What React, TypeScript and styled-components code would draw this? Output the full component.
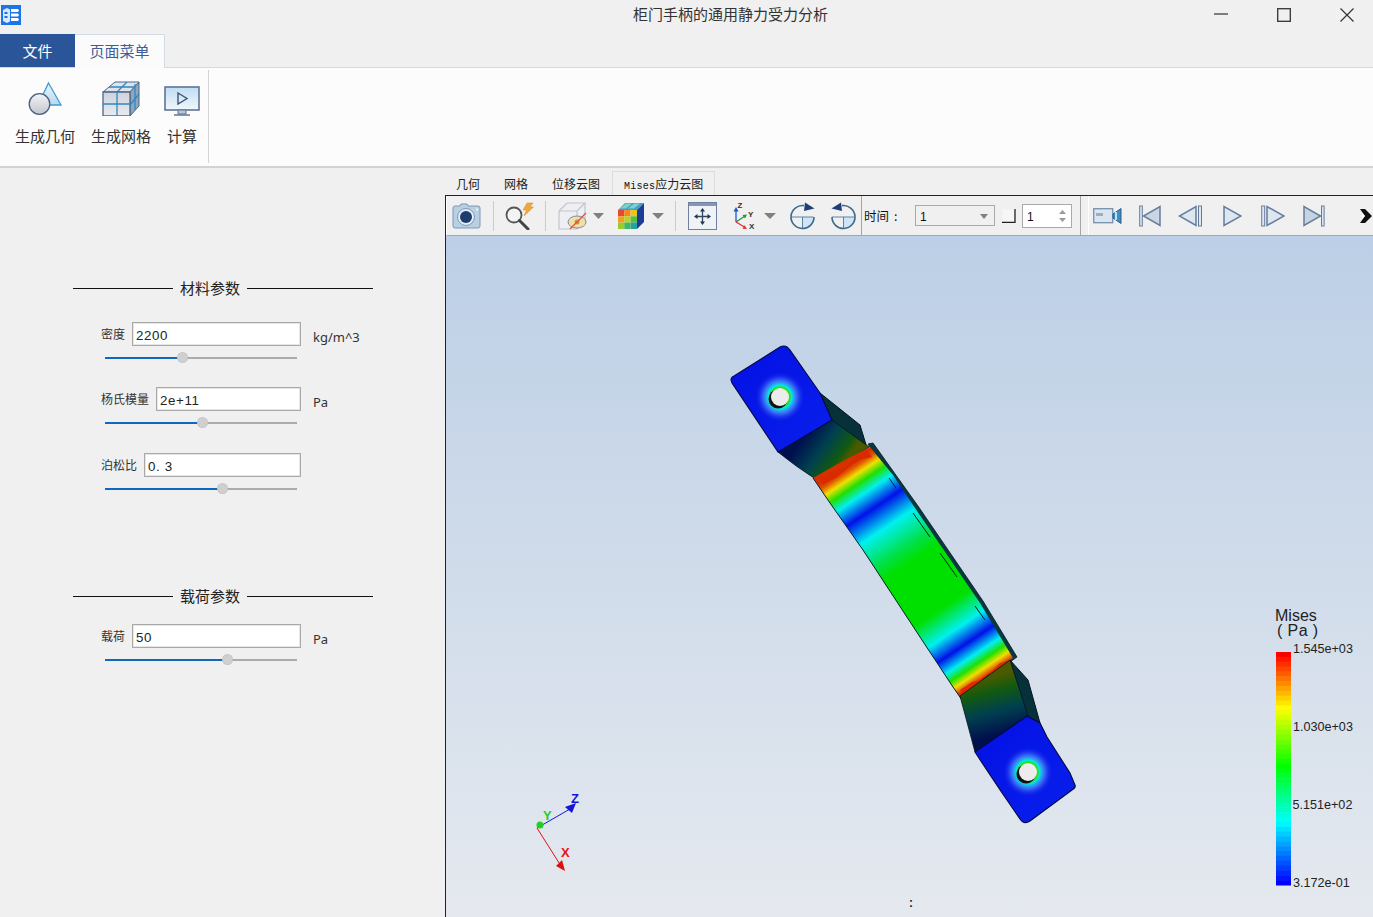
import React from "react";
import styled, { createGlobalStyle } from "styled-components";

const CJK = `"Noto Sans CJK SC", "Noto Sans", sans-serif`;
const MONO = `"Liberation Mono", "Noto Sans CJK SC", monospace`;

const Global = createGlobalStyle`
  html, body { margin: 0; padding: 0; background: #f0f0f0; }
  * { box-sizing: border-box; }
`;

const Win = styled.div`
  width: 1373px; height: 917px; display: flex; flex-direction: column;
  overflow: hidden; background: #f0f0f0; font-family: ${CJK}; color: #222;
`;
const TitleBar = styled.div`display: flex; align-items: flex-start; height: 34px; flex: none;`;
const AppIcon = styled.svg`width: 20px; height: 20px; margin: 5px 0 0 1px; flex: none; display: block;`;
const Title = styled.div`
  width: 196px; margin: 4px 0 0 612px; font-size: 15px; line-height: 20px; color: #333; white-space: nowrap;
`;
const WinCtl = styled.div`display: flex; gap: 49px; margin: 8px 0 0 385px;`;
const WinBtn = styled.svg`width: 14px; height: 14px; display: block;`;

const MenuRow = styled.div`
  display: flex; height: 34px; flex: none; border-bottom: 1px solid #d9d9d9;
`;
const FileTab = styled.div`
  width: 75px; height: 33px; background: #2a5699; color: #fff; font-size: 15px;
  line-height: 34px; text-align: center;
`;
const PageTab = styled.div`
  width: 90px; height: 34px; background: #fbfbfb; color: #3f5f9a; font-size: 15px; line-height: 31px;
  text-align: center; border: 1px solid #d5dbe3; border-bottom: none; border-left: none;
  position: relative; z-index: 1;
`;

const Ribbon = styled.div`
  display: flex; height: 100px; flex: none; background: #fcfcfc; border-bottom: 2px solid #d2d2d2;
`;
const RibbonGroup = styled.div`
  display: flex; gap: 16px; padding: 0 11px 0 15px; margin: 2px 0 3px; border-right: 1px solid #d4d4d4; height: 93px;
`;
const RibbonBtn = styled.div`display: flex; flex-direction: column; align-items: center; padding-top: 8px;`;
const RibbonIcon = styled.svg`height: 38px; width: 38px; margin: 0 -4px; display: block;`;
const RibbonLabel = styled.div`font-size: 15px; line-height: 20px; margin-top: 10px; color: #333; white-space: nowrap;`;

const Main = styled.div`display: flex; flex: 1; min-height: 0;`;
const Panel = styled.div`width: 445px; flex: none; padding: 110px 0 0 73px;`;
const Heading = styled.div<{ $mt?: number }>`
  display: flex; align-items: center; width: 300px; height: 20px; font-size: 15px; color: #222;
  margin-top: ${(p) => p.$mt ?? 0}px;
`;
const HeadLine = styled.div<{ $w?: number }>`
  height: 1px; background: #111; ${(p) => (p.$w ? `width: ${p.$w}px;` : "flex: 1;")}
`;
const HeadText = styled.div`margin: 0 7px; padding-bottom: 2px; white-space: nowrap; width: 60px;`;

const Field = styled.div<{ $mt: number }>`margin: ${(p) => p.$mt}px 0 0 28px;`;
const Row = styled.div`display: flex; align-items: flex-start;`;
const InputWrap = styled.div`display: flex; align-items: center; width: 200px; gap: 7px; flex: none;`;
const Label = styled.label`font-size: 12px; line-height: 24px; color: #333; white-space: nowrap; flex: none;`;
const Input = styled.input`
  flex: 1; min-width: 0; height: 24px; border: 1px solid #a9a9a9; outline: 1px solid #e6e6e6; outline-offset: -2px;
  background: #fff; font: 13.33px "Liberation Sans", sans-serif; letter-spacing: .6px; color: #222;
  padding: 2px 3px 0; margin: 0;
`;
const Unit = styled.div`font: 13px "Noto Sans", sans-serif; line-height: 18px; margin: 6px 0 0 12px; color: #333; white-space: nowrap;`;
const Slider = styled.div`position: relative; width: 192px; height: 12px; margin: 6px 0 0 4px;`;
const Track = styled.div`position: absolute; left: 0; right: 0; top: 5px; height: 2px; background: #ababab;`;
const Fill = styled.div`position: absolute; left: 0; top: 5px; height: 2px; background: #0f68b8;`;
const Thumb = styled.div`
  position: absolute; top: 0; width: 11px; height: 11px; margin-left: -5px; border-radius: 50%;
  background: #cfcfcf; border: 1px dotted #bdbdbd;
`;

const Right = styled.div`flex: 1; display: flex; flex-direction: column; min-width: 0;`;
const TabBar = styled.div`display: flex; height: 27px; flex: none; align-items: flex-end; margin-left: -1px;`;
const ViewTab = styled.div<{ $active?: boolean }>`
  height: 24px; padding: 0 11px; font-size: 12px; line-height: 23px; color: #222; white-space: nowrap;
  border: 1px solid ${(p) => (p.$active ? "#dcdcdc" : "transparent")}; border-bottom: none;
`;
const Latin = styled.span`font-family: ${MONO}; font-size: 10px; letter-spacing: .25px; color: #111;`;
const Body = styled.div`
  flex: 1; display: flex; flex-direction: column; min-height: 0;
  border-left: 1px solid #222; border-top: 1px solid #222;
`;
const Toolbar = styled.div`
  display: flex; align-items: center; height: 40px; flex: none; overflow: hidden;
  border-bottom: 1px solid #a6a6a6; border-left: 1px solid #fff; background: #f0f0f0;
`;
const Tool = styled.svg<{ $ml: number; $w: number; $h?: number }>`
  flex: none; display: block; margin-left: ${(p) => p.$ml}px; width: ${(p) => p.$w}px; height: ${(p) => p.$h ?? 28}px;
`;
const Sep = styled.div<{ $ml: number }>`flex: none; width: 1px; height: 30px; background: #cbcbcb; margin-left: ${(p) => p.$ml}px;`;
const FullSep = styled.div<{ $ml: number; $c: string }>`
  flex: none; width: 1px; align-self: stretch; background: ${(p) => p.$c}; margin-left: ${(p) => p.$ml}px;
`;
const TimeLabel = styled.div`flex: none; width: 36px; margin-left: 2px; font-size: 12.500px; color: #111; white-space: nowrap;`;
const Colon = styled.span`margin-left: 5px;`;
const Combo = styled.div`
  flex: none; display: flex; align-items: center; justify-content: space-between; margin-left: 15px; width: 80px; height: 21px;
  border: 1px solid #a9a9a9; font: 12px "Liberation Sans", sans-serif; padding: 2px 6px 0 4px; color: #111;
`;
const Caret = styled.div`width: 0; height: 0; border: 4px solid transparent; border-top: 5px solid #808080; border-bottom: none;`;
const Spin = styled.div`
  flex: none; display: flex; align-items: center; justify-content: space-between; margin-left: 6px; width: 50px; height: 24px;
  border: 1px solid #a9a9a9; background: #fff; font: 12px "Liberation Sans", sans-serif; padding: 2px 5px 0 4px; color: #111;
`;
const SpinArrows = styled.svg`width: 7px; height: 12px; display: block; margin-top: -2px;`;

const Viewport = styled.div`
  flex: 1; min-height: 0; background: linear-gradient(180deg, #bccfe6 0%, #e5e9ef 100%);
`;
const Scene = styled.svg`display: block; width: 927px; height: 681px;`;

const params = [
  { label: "密度", value: "2200", unit: "kg/m^3", pct: 40, mt: 24 },
  { label: "杨氏模量", value: "2e+11", unit: "Pa", pct: 50.5, mt: 23 },
  { label: "泊松比", value: "0. 3", unit: "", pct: 61, mt: 24 },
];

const ParamField: React.FC<{ label: string; value: string; unit: string; pct: number; mt: number }> = ({ label, value, unit, pct, mt }) => (
  <Field $mt={mt}>
    <Row>
      <InputWrap>
        <Label>{label}</Label>
        <Input readOnly value={value} />
      </InputWrap>
      {unit && <Unit>{unit}</Unit>}
    </Row>
    <Slider>
      <Track />
      <Fill style={{ width: `${pct}%` }} />
      <Thumb style={{ left: `${pct}%` }} />
    </Slider>
  </Field>
);

const stops: [number, string][] = [
  [0, "#ff0000"], [0.236, "#ffff00"], [0.49, "#00ff00"], [0.735, "#00ffff"], [1, "#0000ff"],
];
function legendColor(t: number): string {
  for (let i = 0; i < stops.length - 1; i++) {
    const [a, ca] = stops[i];
    const [b, cb] = stops[i + 1];
    if (t <= b) {
      const f = (t - a) / (b - a);
      const ch = (o: number) => {
        const x = parseInt(ca.slice(o, o + 2), 16);
        const y = parseInt(cb.slice(o, o + 2), 16);
        return Math.round(x + (y - x) * f);
      };
      return `rgb(${ch(1)},${ch(3)},${ch(5)})`;
    }
  }
  return "#0000ff";
}
const bands = Array.from({ length: 48 }, (_, i) => i);

const Rotate: React.FC<{ ml: number; ccw?: boolean }> = ({ ml, ccw }) => (
  <Tool $ml={ml} $w={27} viewBox="0 0 27 28">
    <path d="M13.500 15h11a11.500 11.500 0 0 1-11 11z" fill="#cfe4f5" />
    <path d="M2 15H24.500M13.500 15V26" stroke="#5b84a6" strokeWidth="1" fill="none" />
    <g transform={ccw ? "matrix(-1 0 0 1 27 0)" : undefined}>
      <path d="M25 15A11.500 11.500 0 1 1 15 3.600" fill="none" stroke="#3d6b8e" strokeWidth="1.600" />
      <path d="M16 .5L25.500 6.500L15 9z" fill="#1f3f74" />
    </g>
  </Tool>
);

const playStroke = "#667c9c";
const playFill = "#dde7f2";

export default function App() {
  return (
    <Win>
      <Global />
      <TitleBar>
        <AppIcon viewBox="0 0 20 20">
          <rect width="20" height="20" fill="#1b74e8" />
          <path d="M2 5l4-2 3 1.500v12L6 18l-4-2z" fill="#d8e8fb" />
          <path d="M10 4h7l1 1.500-1 1.500h-7zM10 8.500h7l1 1.500-1 1.500h-7zM10 13h7l1 1.500-1 1.500h-7z" fill="#fff" />
          <path d="M3.500 7h3v2h-3zM3.500 11h3v2h-3z" fill="#1b74e8" />
        </AppIcon>
        <Title>柜门手柄的通用静力受力分析</Title>
        <WinCtl>
          <WinBtn viewBox="0 0 14 14"><path d="M0 6h14" stroke="#333" strokeWidth="1.200" /></WinBtn>
          <WinBtn viewBox="0 0 14 14"><rect x=".7" y=".7" width="12.600" height="12.600" fill="none" stroke="#333" strokeWidth="1.300" /></WinBtn>
          <WinBtn viewBox="0 0 14 14"><path d="M.5.5l13 13M13.500.5l-13 13" stroke="#333" strokeWidth="1.200" /></WinBtn>
        </WinCtl>
      </TitleBar>

      <MenuRow>
        <FileTab>文件</FileTab>
        <PageTab>页面菜单</PageTab>
      </MenuRow>

      <Ribbon>
        <RibbonGroup>
          <RibbonBtn>
            <RibbonIcon viewBox="0 0 38 38">
              <defs>
                <linearGradient id="geoA" x1="0" y1="0" x2="0" y2="1"><stop offset="0" stopColor="#f2f3f6" /><stop offset="1" stopColor="#c2c6d0" /></linearGradient>
                <linearGradient id="triA" x1="0" y1="0" x2="0" y2="1"><stop offset="0" stopColor="#eaf4fb" /><stop offset="1" stopColor="#b9d9ef" /></linearGradient>
              </defs>
              <path d="M22.500 5L35 27H12z" fill="url(#triA)" stroke="#3f9bd1" strokeWidth="1.300" />
              <circle cx="13.500" cy="26" r="10.300" fill="url(#geoA)" stroke="#4d5f80" strokeWidth="1.300" />
            </RibbonIcon>
            <RibbonLabel>生成几何</RibbonLabel>
          </RibbonBtn>
          <RibbonBtn>
            <RibbonIcon viewBox="0 0 38 38">
              <defs>
                <linearGradient id="meshF" x1="0" y1="0" x2="0" y2="1"><stop offset="0" stopColor="#cdd3dc" /><stop offset="1" stopColor="#e8ebef" /></linearGradient>
              </defs>
              <path d="M1 14L13 4H37L28 14z" fill="#dfe4ea" stroke="#4f6687" />
              <path d="M28 14L37 4V28L28 38z" fill="#8fa6bf" stroke="#4f6687" />
              <path d="M1 14H28V38H1z" fill="url(#meshF)" stroke="#4f6687" strokeWidth="1.300" />
              <path d="M15 14V38M1 26H28M33 6V32M28 27L37 16M15 14L25 4M7 9H32" stroke="#3088bf" strokeWidth="1.300" fill="none" />
            </RibbonIcon>
            <RibbonLabel>生成网格</RibbonLabel>
          </RibbonBtn>
          <RibbonBtn>
            <RibbonIcon viewBox="0 0 38 38">
              <defs>
                <linearGradient id="scr" x1="0" y1="0" x2="0" y2="1"><stop offset="0" stopColor="#bfdcf4" /><stop offset="1" stopColor="#f2f7fb" /></linearGradient>
              </defs>
              <rect x="2" y="9" width="34" height="23" fill="url(#scr)" stroke="#5f7594" strokeWidth="1.600" />
              <path d="M15 32h8v4h-8z" fill="#b7c6d6" stroke="#5f7594" />
              <path d="M11 37h16" stroke="#5f7594" strokeWidth="1.500" />
              <path d="M15 15l9 5.500-9 5.500z" fill="none" stroke="#3b5478" strokeWidth="1.400" />
            </RibbonIcon>
            <RibbonLabel>计算</RibbonLabel>
          </RibbonBtn>
        </RibbonGroup>
      </Ribbon>

      <Main>
        <Panel>
          <Heading>
            <HeadLine $w={100} />
            <HeadText>材料参数</HeadText>
            <HeadLine />
          </Heading>
          {params.map((p) => <ParamField key={p.label} {...p} />)}
          <Heading $mt={91}>
            <HeadLine $w={100} />
            <HeadText>载荷参数</HeadText>
            <HeadLine />
          </Heading>
          <ParamField label="载荷" value="50" unit="Pa" pct={63.5} mt={18} />
        </Panel>

        <Right>
          <TabBar>
            <ViewTab>几何</ViewTab>
            <ViewTab>网格</ViewTab>
            <ViewTab>位移云图</ViewTab>
            <ViewTab $active><Latin>Mises</Latin>应力云图</ViewTab>
          </TabBar>
          <Body>
            <Toolbar>
              <Tool $ml={5} $w={29} viewBox="0 0 29 28">
                <path d="M8 4l1-2h6l1 2h10a2 2 0 0 1 2 2v18a2 2 0 0 1-2 2H3a2 2 0 0 1-2-2V6a2 2 0 0 1 2-2z" fill="#b9cfe4" stroke="#7e97b5" />
                <circle cx="14" cy="15" r="8.500" fill="#e3edf6" stroke="#7e97b5" />
                <circle cx="14" cy="15" r="6" fill="#1f3c6e" />
                <circle cx="25" cy="7.500" r="1" fill="#fff" />
              </Tool>
              <Sep $ml={12} />
              <Tool $ml={11} $w={30} viewBox="0 0 30 28">
                <circle cx="9" cy="13" r="7.500" fill="#f1f3f5" stroke="#555" strokeWidth="1.800" />
                <path d="M14.500 18.500L23 27" stroke="#444" strokeWidth="3" strokeLinecap="round" />
                <path d="M22 1h6l-3 4h3.500L19 14l2.500-6H18z" fill="#f0a63a" stroke="#d98b20" strokeWidth=".5" />
              </Tool>
              <Sep $ml={10} />
              <Tool $ml={12} $w={29} viewBox="0 0 29 28">
                <path d="M1 9L9 1H27V19L19 27H1z" fill="#eeeff2" stroke="#c0c6cf" strokeWidth="1.200" />
                <path d="M1 9H19V27M19 9L27 1" fill="none" stroke="#c0c6cf" strokeWidth="1.200" />
                <ellipse cx="19" cy="20" rx="9" ry="6" fill="#f2dfa8" stroke="#7d8aa0" />
                <circle cx="19" cy="20" r="2.500" fill="#c9924a" />
                <path d="M12 27L28 11" stroke="#d8583c" strokeWidth="1.200" />
              </Tool>
              <Tool $ml={6} $w={11} $h={8} viewBox="0 0 11 8"><path d="M0 1h11L5.500 7z" fill="#808080" /></Tool>
              <Tool $ml={13} $w={28} viewBox="0 0 28 28">
                <path d="M1 8L8 1H27L20 8z" fill="#3c9fd8" />
                <path d="M20 8L27 1V20L20 27z" fill="#1b3d95" />
                <path d="M1 8h6.300v6.300H1z" fill="#e64830" />
                <path d="M7.300 8h6.300v6.300H7.300z" fill="#f08a20" />
                <path d="M13.600 8H20v6.300h-6.400z" fill="#e8c820" />
                <path d="M1 14.300h6.300v6.300H1z" fill="#f3a020" />
                <path d="M7.300 14.300h6.300v6.300H7.300z" fill="#b9d428" />
                <path d="M13.600 14.300H20v6.300h-6.400z" fill="#58c040" />
                <path d="M1 20.600h6.300V27H1z" fill="#9ccb30" />
                <path d="M7.300 20.600h6.300V27H7.300z" fill="#40b860" />
                <path d="M13.600 20.600H20V27h-6.400z" fill="#28a0a0" />
                <path d="M3 6.500L9 1.500h6L9 6.500zM11 6.500l6-5h6l-6 5z" fill="#7ed1c0" />
              </Tool>
              <Tool $ml={7} $w={12} $h={8} viewBox="0 0 12 8"><path d="M0 1h12L6 7z" fill="#808080" /></Tool>
              <Sep $ml={11} />
              <Tool $ml={12} $w={29} viewBox="0 0 29 28">
                <rect x=".5" y=".5" width="28" height="27" fill="#eff2f6" stroke="#6f80a0" />
                <rect x="1" y="1" width="27" height="3" fill="#8797b3" />
                <path d="M14.500 8v13M8 14.500h13" stroke="#33465f" strokeWidth="1.300" />
                <path d="M14.500 6l2.500 3.500h-5zM14.500 23l2.500-3.500h-5zM6 14.500l3.500-2.500v5zM23 14.500L19.500 12v5z" fill="#22364f" />
              </Tool>
              <Tool $ml={16} $w={24} viewBox="0 0 24 28">
                <path d="M3 20V8" stroke="#1f56c8" strokeWidth="1.300" />
                <path d="M3 5l2.500 4.500h-5z" fill="#1f56c8" />
                <path d="M3 20L12 14" stroke="#1f9c3a" strokeWidth="1.300" />
                <path d="M14 12.500l-2 4-2.500-3.500z" fill="#1f9c3a" />
                <path d="M3 20l8.500 5" stroke="#e03030" strokeWidth="1.300" />
                <path d="M14 27l-4.500-.2 2-3.500z" fill="#e03030" />
                <text x="4.500" y="6" fontFamily="Liberation Sans" fontWeight="bold" fontSize="8" fill="#333">Z</text>
                <text x="15" y="15" fontFamily="Liberation Sans" fontWeight="bold" fontSize="8" fill="#333">Y</text>
                <text x="16" y="27" fontFamily="Liberation Sans" fontWeight="bold" fontSize="8" fill="#333">X</text>
              </Tool>
              <Tool $ml={7} $w={12} $h={8} viewBox="0 0 12 8"><path d="M0 1h12L6 7z" fill="#808080" /></Tool>
              <Rotate ml={13} />
              <Rotate ml={14} ccw />
              <FullSep $ml={4} $c="#a6a6a6" />
              <TimeLabel>时间<Colon>:</Colon></TimeLabel>
              <Combo>1<Caret /></Combo>
              <Tool $ml={7} $w={14} $h={14} viewBox="0 0 14 14">
                <rect x=".5" y=".5" width="12" height="12" fill="#f6f6f6" />
                <path d="M13 0v13.500H0" fill="none" stroke="#222" strokeWidth="1.300" />
              </Tool>
              <Spin>1
                <SpinArrows viewBox="0 0 7 12"><path d="M3.500 0L7 4H0zM3.500 12L0 8h7z" fill="#9a9a9a" /></SpinArrows>
              </Spin>
              <FullSep $ml={8} $c="#a6a6a6" />
              <FullSep $ml={7} $c="#ffffff" />
              <Tool $ml={4} $w={30} $h={18} viewBox="0 0 30 18">
                <rect x=".7" y="1.700" width="19" height="14" fill="#dbe5f0" stroke="#7890ad" strokeWidth="1.300" />
                <rect x="3" y="6" width="7" height="3" fill="#9daec2" />
                <path d="M20 7l8-5.500v15L20 11z" fill="#3b8fc9" stroke="#35587e" />
                <path d="M23 5v8" stroke="#bfe0f5" strokeWidth="2" />
              </Tool>
              <Tool $ml={16} $w={22} $h={22} viewBox="0 0 22 22">
                <rect x=".7" y="1" width="2.600" height="20" fill={playFill} stroke={playStroke} />
                <path d="M21 1.500V20.500L4.500 11z" fill="#c9d6e4" stroke={playStroke} strokeWidth="1.500" />
              </Tool>
              <Tool $ml={17} $w={25} $h={22} viewBox="0 0 25 22">
                <path d="M18 1.500V20.500L1.500 11z" fill={playFill} stroke={playStroke} strokeWidth="1.500" />
                <rect x="20.500" y="1" width="3" height="20" fill={playFill} stroke={playStroke} />
              </Tool>
              <Tool $ml={20} $w={19} $h={22} viewBox="0 0 19 22">
                <path d="M1 1.500V20.500L18 11z" fill={playFill} stroke={playStroke} strokeWidth="1.500" />
              </Tool>
              <Tool $ml={19} $w={24} $h={22} viewBox="0 0 24 22">
                <rect x=".7" y="1" width="3" height="20" fill={playFill} stroke={playStroke} />
                <path d="M6 1.500V20.500L23 11z" fill={playFill} stroke={playStroke} strokeWidth="1.500" />
              </Tool>
              <Tool $ml={18} $w={22} $h={22} viewBox="0 0 22 22">
                <path d="M1 1.500V20.500L17.500 11z" fill="#c5d3e2" stroke={playStroke} strokeWidth="1.500" />
                <rect x="18.500" y="1" width="2.600" height="20" fill={playFill} stroke={playStroke} />
              </Tool>
              <Tool $ml={35} $w={12} $h={18} viewBox="0 0 12 18">
                <path d="M0 2h5l4 4 3 3-3 3-4 4H0l5-7z" fill="#111" />
                <path d="M2 6l3 3-3 3z" fill="#fff" />
              </Tool>
            </Toolbar>

            <Viewport>
              <Scene viewBox="446 236 927 681">
                <defs>
                  <linearGradient id="band" gradientUnits="userSpaceOnUse" x1="846" y1="466" x2="986" y2="676">
                    <stop offset="0" stopColor="#d93000" />
                    <stop offset=".02" stopColor="#e05000" />
                    <stop offset=".05" stopColor="#f0e000" />
                    <stop offset=".085" stopColor="#20e000" />
                    <stop offset=".13" stopColor="#00f0f0" />
                    <stop offset=".2" stopColor="#0010e8" />
                    <stop offset=".29" stopColor="#00f0f0" />
                    <stop offset=".4" stopColor="#00e048" />
                    <stop offset=".46" stopColor="#00e000" />
                    <stop offset=".68" stopColor="#00e000" />
                    <stop offset=".78" stopColor="#00f0f0" />
                    <stop offset=".85" stopColor="#0010e8" />
                    <stop offset=".905" stopColor="#00f0f0" />
                    <stop offset=".94" stopColor="#20e000" />
                    <stop offset=".97" stopColor="#f0e000" />
                    <stop offset=".995" stopColor="#e05000" />
                    <stop offset="1" stopColor="#d93000" />
                  </linearGradient>
                  <linearGradient id="inclTop" gradientUnits="userSpaceOnUse" x1="805" y1="436" x2="843" y2="464">
                    <stop offset="0" stopColor="#00104e" />
                    <stop offset=".45" stopColor="#00404f" />
                    <stop offset=".85" stopColor="#125a10" />
                    <stop offset="1" stopColor="#4a5a00" />
                  </linearGradient>
                  <linearGradient id="inclBot" gradientUnits="userSpaceOnUse" x1="986" y1="678" x2="1001" y2="734">
                    <stop offset="0" stopColor="#4a5a00" />
                    <stop offset=".25" stopColor="#125a10" />
                    <stop offset=".6" stopColor="#00404f" />
                    <stop offset="1" stopColor="#00104e" />
                  </linearGradient>
                  <radialGradient id="halo">
                    <stop offset=".38" stopColor="#30e000" />
                    <stop offset=".47" stopColor="#00e8e8" />
                    <stop offset=".68" stopColor="#60a0ff" stopOpacity=".55" />
                    <stop offset="1" stopColor="#0a20f0" stopOpacity="0" />
                  </radialGradient>
                  <linearGradient id="tabTop" x1="0" y1="0" x2="1" y2="1">
                    <stop offset="0" stopColor="#0410e4" />
                    <stop offset="1" stopColor="#0820ec" />
                  </linearGradient>
                  <filter id="soft"><feGaussianBlur stdDeviation=".7" /></filter>
                </defs>

                <path d="M820 393L860 425L867 448L832 420Z" fill="#06303a" stroke="#031418" />
                <path d="M778 452L832 420L869 447L817 480Q795 466 778 452Z" fill="url(#inclTop)" stroke="#04141c" strokeWidth=".8" />
                <path d="M731 380Q731 377 734 376L780 347Q786 344 790 350L820 393L832 420L778 452L732 383Z" fill="url(#tabTop)" stroke="#020a40" strokeWidth="1.100" />
                <circle cx="780" cy="397" r="25" fill="url(#halo)" />
                <circle cx="778" cy="399" r="9.500" fill="#111" />
                <circle cx="780" cy="397" r="9" fill="#ececec" />

                <path d="M868 444L873 443L918 506L983 601L1017 657L1010 662Z" fill="#0a3840" stroke="#03181c" strokeWidth=".8" />
                <path d="M813 478Q840 462 870 447L893 475L915 508L980 603L1013 658Q985 678 962 700L953 687L920 637L863 550L830 503Z" fill="url(#band)" />
                <path d="M813 478L830 503L863 550L920 637L953 687L962 700" fill="none" stroke="#03202a" strokeWidth="1" />
                <path d="M889 478L896 488M913 513L930 537M940 553L957 577M975 606L985 620" fill="none" stroke="#062028" strokeWidth="1" />
                <path d="M820 478L830 472L845 467L852 460L867 450L872 457L860 460L852 465L837 477L823 485Z" fill="#d92a00" filter="url(#soft)" />
                <path d="M960 690L972 682L982 680L993 670L1000 663L1010 660L1012 667L997 673L980 687L963 697Z" fill="#d92a00" filter="url(#soft)" />
                <path d="M982 680L990 674" stroke="#222" strokeWidth="1" />

                <path d="M1010 660L1028 680L1040 723L1027 717Z" fill="#06303a" stroke="#031418" />
                <path d="M960 696L1010 660L1028 716L975 752Q967 722 960 696Z" fill="url(#inclBot)" stroke="#04141c" strokeWidth=".8" />
                <path d="M975 752L1027 716L1040 723L1047 737L1070 773L1075 785Q1076 788 1072 790L1030 821Q1024 825 1020 819Q997 786 975 752Z" fill="url(#tabTop)" stroke="#020a40" strokeWidth="1.100" />
                <circle cx="1028" cy="772" r="25" fill="url(#halo)" />
                <circle cx="1026" cy="774" r="9.500" fill="#111" />
                <circle cx="1028" cy="772" r="9" fill="#ececec" />

                <path d="M537 828L570 809" stroke="#1414d8" strokeWidth="1" />
                <path d="M576 803L572 813L565 807Z" fill="#1414d8" />
                <circle cx="540" cy="825" r="3.500" fill="#22d022" />
                <path d="M537 828L561 866" stroke="#e01010" strokeWidth="1" />
                <path d="M565 871L556 866L562 860Z" fill="#e01010" />
                <text x="571" y="803" fontFamily="Liberation Sans" fontWeight="bold" fontSize="13" fill="#1414d8">Z</text>
                <text x="543" y="820" fontFamily="Liberation Sans" fontWeight="bold" fontSize="13" fill="#22d022">Y</text>
                <text x="561" y="857" fontFamily="Liberation Sans" fontWeight="bold" fontSize="13" fill="#f01010">X</text>

                {bands.map((i) => (
                  <rect key={i} x="1276" y={652 + (i * 233) / 48} width="15" height={233 / 48 + 0.5} fill={legendColor(i / 47)} />
                ))}
                <text x="1275" y="621" fontFamily="Liberation Sans" fontSize="16" fill="#222">Mises</text>
                <text x="1277" y="636" fontFamily="Liberation Sans" fontSize="16" letterSpacing=".4" fill="#222">( Pa )</text>
                <text x="1293" y="653" fontFamily="Liberation Sans" fontSize="12.600" fill="#222">1.545e+03</text>
                <text x="1293" y="731" fontFamily="Liberation Sans" fontSize="12.600" fill="#222">1.030e+03</text>
                <text x="1292.500" y="809" fontFamily="Liberation Sans" fontSize="12.600" fill="#222">5.151e+02</text>
                <text x="1293" y="887" fontFamily="Liberation Sans" fontSize="12.600" fill="#222">3.172e-01</text>
                <text x="909" y="907" fontFamily="Liberation Sans" fontSize="12" fontWeight="bold" fill="#222">:</text>
              </Scene>
            </Viewport>
          </Body>
        </Right>
      </Main>
    </Win>
  );
}
